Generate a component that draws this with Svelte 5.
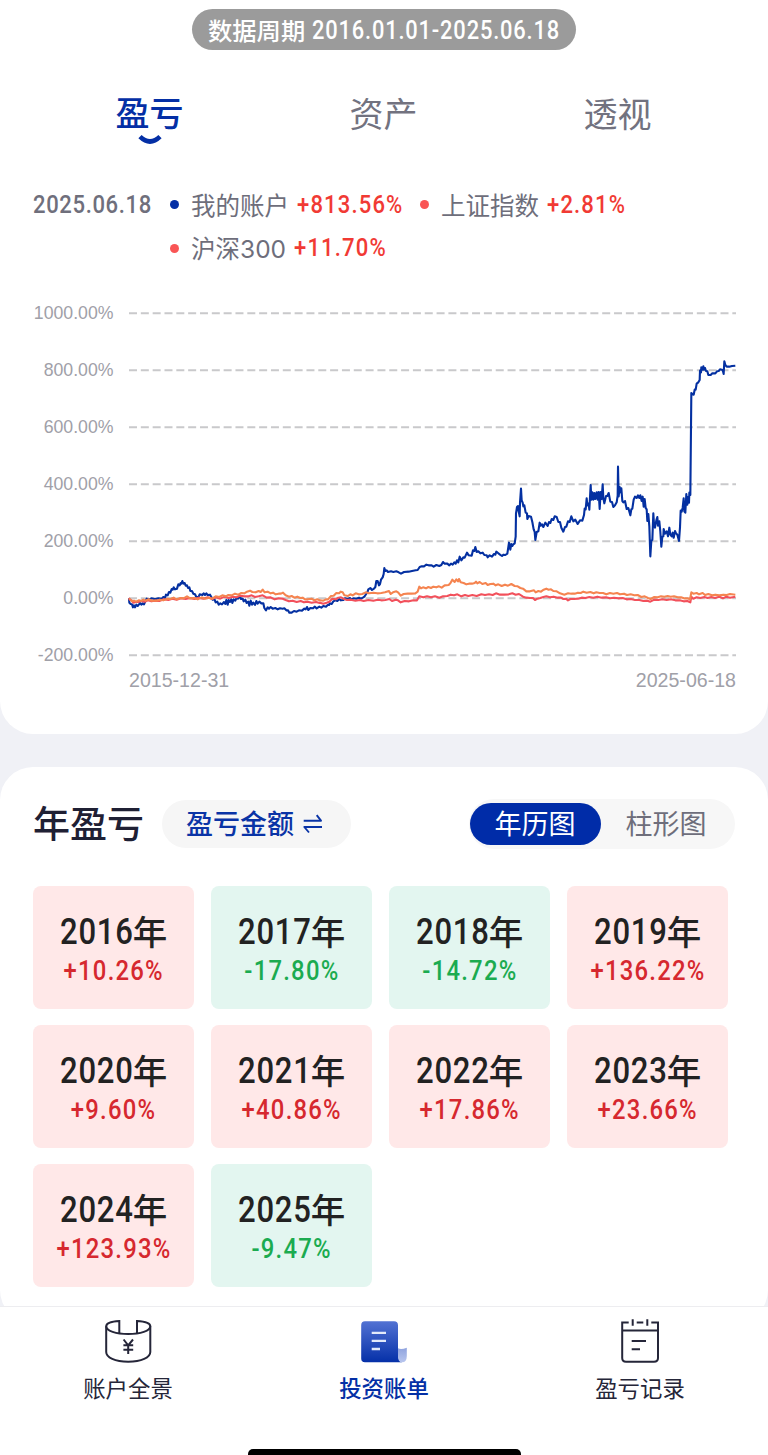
<script>
  const tabs = ['盈亏', '资产', '透视'];
  const years = [
    ['2016', '+10.26%'], ['2017', '-17.80%'], ['2018', '-14.72%'], ['2019', '+136.22%'],
    ['2020', '+9.60%'], ['2021', '+40.86%'], ['2022', '+17.86%'], ['2023', '+23.66%'],
    ['2024', '+123.93%'], ['2025', '-9.47%']
  ];
  const ticks = [1000, 800, 600, 400, 200, 0, -200];

  // Each run holds an origin and thirds-of-a-pixel offsets from it.
  const account = [
    [120, 560, '27,115 28,128 32,132 36,133 39,142 42,136 45,142 49,134 53,138 57,133 60,129 64,134 68,130 72,133 77,122 80,116 86,119 95,115 105,118 115,115 125,116 130,111 135,114 138,104 143,106 147,96 151,98 155,87 158,89 161,82 165,88 171,86 175,73 179,76 182,69 184,71 187,63 190,71 194,69 197,77 201,76 204,84 208,82 211,93 216,93 220,101 225,103 229,111 236,110 239,103 247,105 251,100 255,105 259,100 263,105 270,104 274,111 278,119 283,117 287,127 292,125 296,134 301,130 306,133 312,126 316,132 319,120 323,134 326,120 330,126 334,118 337,129 341,118 346,122 350,113 354,116 359,107 363,117 368,116 371,124 376,119 380,129 385,125 388,137 392,122 396,134 400,128 405,135 409,123 413,131 418,125 424,130 430,130 433,144 438,151 443,142 447,146 452,141 458,146 466,144 473,148 480,145 488,146 493,145 499,151 504,151 508,158 515,158 522,153 530,155 537,151 546,152 553,146 557,148 561,141 565,150 571,144 579,145 584,140 590,145 598,140 604,143 610,138 618,140 623,135'],
    [320, 530, '27,225 29,220 35,222 40,214 46,211 52,213 58,207 63,211 70,210 75,205 83,207 90,204 95,209 100,205 109,206 117,203 123,206 130,202 134,199 137,194 142,187 145,178 151,174 156,180 162,176 166,171 169,153 173,153 177,166 180,162 183,149 188,142 191,132 193,114 196,123 200,121 204,126 213,124 220,126 229,124 236,127 243,131 252,126 266,125 276,123 287,121 293,120 299,111 305,109 312,109 319,104 326,106 335,106 341,110 349,105 358,108 364,105 369,96 374,101 382,101 388,106 393,101 398,104 403,97 407,101 411,91 415,97 419,80 424,91 430,82 434,83 441,68 446,76 455,77 459,61 463,63 466,51 470,66 475,64 481,70 488,68 493,75 500,76 503,82 509,76 516,80 522,72 526,74 529,65 534,69 540,74 546,78 550,74 556,75 562,71 567,38 571,59 574,42 577,48 580,43 584,40 587,20'],
    [500, 450, '48,190 51,171 54,168 56,184 59,199 60,158 63,116 65,151 68,158 70,169 73,166 77,188 81,190 82,207 86,198 93,200 97,216 101,238 104,246 106,270 110,246 115,244 119,218 122,227 126,223 130,231 136,218 143,228 147,216 151,219 155,207 160,210 164,199 170,201 175,216 180,216 184,233 190,245 195,231 199,230 204,214 209,216 214,199 220,214 226,209 233,222 240,211 247,212 252,195 254,176 257,178 260,145 262,166 266,161 268,179 272,105 274,149 277,127 280,149 283,129 286,147 290,127 293,149 296,126 299,177 302,126 305,147 308,103 310,144 313,160 318,138 322,138 326,129 331,155 336,156 340,171 345,166 350,157 353,137 354,50 356,139 359,111 361,127 364,115 367,153 370,157 375,153 380,177 385,174'],
    [610, 340, '61,526 64,508 67,506 71,479 75,470 80,474 84,466 88,474 91,466 95,483 98,470 101,500 104,477 107,504 110,508 112,543 115,522 118,559 121,649 124,602 127,600 130,520 132,552 135,563 139,541 142,531 144,557 148,544 151,575 154,620 157,590 160,589 161,567 165,581 170,574 174,589 178,563 181,584 185,589 188,578 191,593 195,573 198,580 202,584 207,603 210,562 212,512 215,515 218,503 221,475 223,514 226,518 229,462 232,494 234,471 237,488 238,458 241,465 244,159 248,163 251,164 254,149 257,149 260,131 265,127 269,120 270,92 273,97 274,82 277,89 280,79 282,89 285,84 288,93 292,94 295,105 302,105 307,100 316,100 321,94 326,93 330,88 338,90 341,102 343,64 346,75 350,80 358,80 366,78 376,77']
  ];
  const shenzhen = [
    [120, 560, '27,116 31,118 36,124 42,122 48,125 57,121 63,123 70,119 76,122 86,118 95,122 110,122 119,119 130,121 143,116 151,117 161,113 170,118 182,114 191,115 201,109 210,115 223,114 233,118 245,112 255,116 267,113 277,116 287,109 298,111 307,106 318,109 325,105 335,106 345,101 355,104 364,99 373,100 381,95 390,92 397,96 407,97 416,93 422,96 428,89 434,97 443,95 452,100 459,98 467,103 476,101 483,101 489,98 497,106 507,110 515,108 523,113 532,110 541,114 548,113 555,118 563,118 575,116 583,121 592,118 599,121'],
    [320, 530, '0,211 10,212 18,208 24,208 33,198 41,197 49,189 57,190 62,185 68,187 73,196 84,198 91,193 98,196 107,190 116,193 127,192 137,187 147,190 160,188 172,190 184,189 195,187 207,183 212,192 219,187 229,184 235,188 242,197 251,192 263,191 274,191 286,190 293,185 298,170 303,175 309,172 318,175 325,171 333,174 340,170 349,172 357,169 365,173 374,166 386,165 391,160 397,149 404,156 409,148 414,154 417,147 422,157 431,159 439,163 447,161 456,161 464,159 468,155 472,160 479,156 487,162 497,159 503,165 511,162 520,161 527,166 535,163 545,168 555,164 564,167 574,162 584,168 593,169 601,174 609,176 619,184'],
    [530, 570, '0,64 12,61 17,67 25,63 33,65 41,59 49,56 56,59 63,58 70,63 80,64 90,70 103,74 114,70 124,71 134,71 144,68 152,69 160,65 170,68 181,66 191,70 199,67 209,69 219,69 229,73 240,69 250,71 261,69 270,73 282,71 291,75 302,73 313,76 323,75 334,81 344,79 354,84 362,87 373,81 383,82 393,79 403,80 413,78 422,80 432,79 443,82 453,82 462,85 472,85 480,88 484,67 490,71 500,69 507,73 518,69 525,75 535,72 546,76 556,74 568,76 580,74 590,75 600,72 616,74']
  ];
  const shanghai = [
    [120, 560, '27,114 30,120 35,121 40,128 47,126 54,126 63,123 74,125 84,121 94,124 105,122 118,123 131,118 145,120 157,116 170,119 183,115 197,117 210,114 223,117 236,113 250,116 263,112 276,117 288,112 301,116 314,110 326,114 338,110 350,112 360,107 373,109 386,109 395,106 405,111 416,109 428,106 440,113 452,112 464,118 477,115 488,116 497,120 507,124 518,122 530,126 542,123 552,127 563,125 575,128 588,126 599,129'],
    [320, 530, '0,218 10,221 20,218 28,215 37,206 47,208 55,203 63,202 70,206 81,210 93,209 106,212 120,210 131,213 145,210 160,212 173,209 184,211 196,210 208,207 216,213 227,209 234,211 242,217 254,213 267,214 280,211 291,211 298,199 310,202 321,199 333,202 345,199 358,203 369,199 382,198 392,194 402,196 412,193 424,199 435,195 445,198 457,195 470,198 484,193 495,195 507,193 518,195 528,190 540,194 552,194 566,193 577,190 587,194 597,192 609,200 619,203'],
    [530, 570, '0,84 9,84 15,90 22,86 31,84 40,81 49,79 60,82 71,80 83,83 93,83 100,87 108,86 114,91 121,87 132,87 144,86 155,83 166,84 178,81 190,83 202,80 215,83 228,82 240,85 252,83 265,85 278,84 290,88 303,87 315,90 328,90 340,93 352,92 361,95 373,89 385,90 397,88 410,90 423,88 436,91 449,91 461,94 472,93 481,97 484,80 490,86 500,82 511,84 523,81 533,84 544,81 555,84 568,80 579,85 589,80 600,83 616,80']
  ];
  const trace = (runs) => runs.flatMap(([ox, oy, points]) =>
    points.split(' ').map((pair) => {
      const [x, y] = pair.split(',').map(Number);
      return `${(ox + x / 3 - 33).toFixed(2)},${(oy + y / 3 - 300).toFixed(2)}`;
    })).join(' ');
</script>

<div class="page">
  <section class="card overview">
    <div class="period">数据周期 <span class="num">2016.01.01-2025.06.18</span></div>
    <nav class="tabs">
      {#each tabs as tab, i}
        <div class="tab" class:active={i === 0}>
          <span>{tab}</span>
          {#if i === 0}
            <svg width="26" height="12" viewBox="0 0 26 12"><path d="M3 2.6Q13 12.4 23 2.6" fill="none" stroke="#042fa5" stroke-width="4.6" /></svg>
          {/if}
        </div>
      {/each}
    </nav>
    <div class="legend">
      <span class="date num"><u>2025.06.18</u></span>
      <div class="series">
        <div class="row">
          <i class="dot blue"></i><span>我的账户</span><b class="num" style:width="106px"><u>+813.56%</u></b>
          <i class="dot second"></i><span>上证指数</span><b class="num"><u>+2.81%</u></b>
        </div>
        <div class="row"><i class="dot"></i><span>沪深<em>300</em></span><b class="num"><u>+11.70%</u></b></div>
      </div>
    </div>
    <svg class="chart" width="710" height="400" viewBox="0 0 710 400">
      {#each ticks as tick, i}
        <line x1="96" x2="703" y1={13.2 + i * 57} y2={13.2 + i * 57} stroke="#c9c9cb" stroke-width="2" stroke-dasharray="8 3.83" />
        <text x="80.5" y={19 + i * 57} text-anchor="end" class="tick">{tick}.00%</text>
      {/each}
      <text x="96" y="386.5" class="day">2015-12-31</text>
      <text x="703" y="386.5" text-anchor="end" class="day">2025-06-18</text>
      <g fill="none" stroke-width="2.1" stroke-linejoin="round">
        <polyline points={trace(account)} stroke="#0430a1" />
        <polyline points={trace(shanghai)} stroke="#f2505b" />
        <polyline points={trace(shenzhen)} stroke="#f58450" />
      </g>
    </svg>
  </section>

  <section class="card yearly">
    <header>
      <h2>年盈亏</h2>
      <button class="amount"><span>盈亏金额</span>
        <svg width="20" height="20" viewBox="0 0 20 20" fill="none" stroke="#0a34a6" stroke-width="1.9" stroke-linejoin="round"><path d="M.7 6.7H18L13.7 1.2M19 13H1.3L6 18.5" /></svg>
      </button>
      <div class="switch"><span class="on">年历图</span><span>柱形图</span></div>
    </header>
    <div class="grid">
      {#each years as [year, rate]}
        <div class="year" class:down={rate[0] === '-'}>
          <div class="name"><span><u>{year}</u></span>年</div>
          <div class="rate"><u>{rate}</u></div>
        </div>
      {/each}
    </div>
  </section>

  <footer>
    <div class="item">
      <svg width="48" height="48" viewBox="0 0 48 48" fill="none" stroke="#252639" stroke-width="2">
        <path d="M15.3 15V3C8 3.5 2.2 5 2.2 8.2V34C2.2 39.5 11 43.7 24.2 43.7S46.3 39.5 46.3 34V8.2C46.3 5 40.5 3.5 33 3V15" />
        <path d="M2.2 8.2C2.2 12.8 12 16 24.2 16S46.3 12.8 46.3 8.2" />
        <path d="M19.6 21.5L24.2 27.3L29 21.5M24.2 27V36M19.4 27.3H29.2M19.4 31.8H29.2" />
      </svg>
      <span>账户全景</span>
    </div>
    <div class="item current">
      <svg width="48" height="48" viewBox="0 0 48 48" fill="none">
        <defs>
          <linearGradient id="sheet" x2="0" y2="1"><stop stop-color="#5272d3" /><stop offset="1" stop-color="#0530a8" /></linearGradient>
          <linearGradient id="curl" x2="0" y2="1"><stop stop-color="#8fa3de" /><stop offset="1" stop-color="#b8c6ee" /></linearGradient>
        </defs>
        <path d="M5 3.3H34Q38 3.3 38 7.3V37Q38 42 42 44.3H5Q1.2 44.3 1.2 40.5V7.3Q1.2 3.3 5 3.3Z" fill="url(#sheet)" />
        <path d="M38 30.3Q41 32 46.8 29.8V38Q46.8 44.3 42 44.3Q38 44.3 38 38Z" fill="url(#curl)" />
        <path d="M11.7 14.8H26M11.7 22.8H26M11.7 31H20" stroke="#e3eafa" stroke-width="2.3" />
      </svg>
      <span>投资账单</span>
    </div>
    <div class="item">
      <svg width="48" height="48" viewBox="0 0 48 48" fill="none" stroke="#252639" stroke-width="2">
        <path d="M12.7 4.4H6.2V40Q6.2 43.8 10 43.8H38Q42 43.8 42 40V4.4H35.3M20.7 4.4H27.3M6.2 12.6H42M16.7 1.3V7.7M31.3 1.3V7.7" />
        <path d="M15.7 23H30M15.7 31.2H24" />
      </svg>
      <span>盈亏记录</span>
    </div>
    <div class="home"></div>
  </footer>
</div>

<style>
  :global(body) { margin: 0; background: #f0f1f6; }
  .page {
    width: 768px; height: 1455px; overflow: hidden; display: flex; flex-direction: column;
    background: #f0f1f6; font-family: 'Noto Sans CJK SC', sans-serif; color: #6e6e7b; position: relative;
  }
  .page * { box-sizing: border-box; }
  .num { font-family: Roboto, sans-serif; font-weight: 500; }
  /* narrow figures with open tracking */
  u { display: inline-block; text-decoration: none; transform: scale(0.9, 1.05); transform-origin: 0 50%; letter-spacing: 0.052em; }
  .card { background: #fff; flex: none; padding: 0 33px; }
  .overview { height: 734px; border-radius: 0 0 33px 33px; display: flex; flex-direction: column; }
  .period {
    display: flex; gap: 7px; padding-left: 16px;
    align-self: center; margin-top: 9px; width: 384px; height: 41px; border-radius: 21px; background: #9b9b9b;
    color: #fff; font-size: 24.3px; font-weight: 500; line-height: 42px; white-space: nowrap;
  }
  .period .num { display: inline-block; transform: scale(0.9, 1.04); transform-origin: 0 50%; letter-spacing: 0.92px; line-height: 44px; }
  .tabs { display: grid; grid-template-columns: repeat(3, 1fr); margin-top: 39px; height: 60px; font-size: 34px; }
  .tab { display: flex; flex-direction: column; align-items: center; line-height: 48px; color: #72727f; }
  .tab span { margin-left: -1px; }
  .tab.active { color: #042fa5; font-weight: 500; }
  .tab.active span { line-height: 45px; }
  .legend { display: flex; margin-top: 34px; font-size: 24.5px; line-height: 43px; }
  .date { width: 137px; color: #6f6f7c; line-height: 44px; }
  .date u { letter-spacing: 0.7px; }
  .row { display: flex; align-items: center; height: 43px; white-space: nowrap; }
  .row em { font-family: Inter, sans-serif; font-style: normal; }
  .row b { margin-left: 8px; color: #f13a34; line-height: 44px; }
  .row + .row { position: relative; top: 0.6px; }
  .dot { width: 9px; height: 9px; border-radius: 50%; background: #f95555; margin-right: 12px; }
  .dot.blue { background: #042fa5; }
  .dot.second { margin-left: 17px; }
  .chart { flex: none; margin-top: 31px; font-family: 'Liberation Sans', sans-serif; fill: #a0a0a8; overflow: visible; }
  .tick { font-size: 17.7px; }
  .day { font-size: 19.6px; }
  .yearly { margin-top: 33px; height: 556px; border-radius: 33px; }
  header { display: flex; align-items: center; height: 114px; }
  h2 { margin: -5px 0 0; width: 129px; font-size: 37px; font-weight: 500; color: #1f2034; white-space: nowrap; line-height: 54px; }
  .amount {
    display: flex; align-items: center; justify-content: center; gap: 9px; width: 189px; height: 48px; padding: 0 4px 0 0; border: 0;
    border-radius: 24px; background: #f6f6f6; color: #0a34a6; font: 500 27px 'Noto Sans CJK SC', sans-serif; white-space: nowrap;
  }
  .amount span { margin-top: -3px; }
  .switch { margin-left: auto; width: 266px; height: 50px; padding: 4px 0 4px 1px; display: flex; border-radius: 25px; background: #f7f7f7; font-size: 27px; line-height: 40px; }
  .switch span { width: 131px; height: 42px; text-align: center; padding-right: 1px; }
  .switch .on { border-radius: 21px; background: #002ca8; color: #fff; }
  .grid { display: grid; grid-template-columns: repeat(4, 161px); gap: 16.5px 17px; margin-top: 5.3px; }
  .year { height: 122.5px; border-radius: 8px; background: #ffe8e8; color: #d6282f; padding-top: 21px; }
  .year.down { background: #e3f6f0; color: #1bab50; }
  .name { display: flex; justify-content: center; color: #222; font-size: 34.5px; line-height: 46px; font-weight: 500; white-space: nowrap; }
  .name span { font-family: Roboto, sans-serif; width: 73px; height: 46px; line-height: 49px; }
  .name u { letter-spacing: 0.85px; }
  .rate { font: 500 26.5px/36px Roboto, sans-serif; text-align: center; }
  .rate u { transform-origin: 50% 50%; }
  footer { position: absolute; left: 0; top: 1306px; width: 768px; height: 149px; background: #fff; border-top: 1px solid #ededf0; display: grid; grid-template-columns: repeat(3, 256px); }
  .item { display: flex; flex-direction: column; align-items: center; padding-top: 11px; font-size: 22.4px; line-height: 42px; color: #252639; }
  .item svg { flex: none; }
  .current { color: #042fa5; font-weight: 500; }
  .home { position: absolute; left: 248px; bottom: 0; width: 273px; height: 6px; border-radius: 5px 5px 0 0; background: #000; }
</style>
